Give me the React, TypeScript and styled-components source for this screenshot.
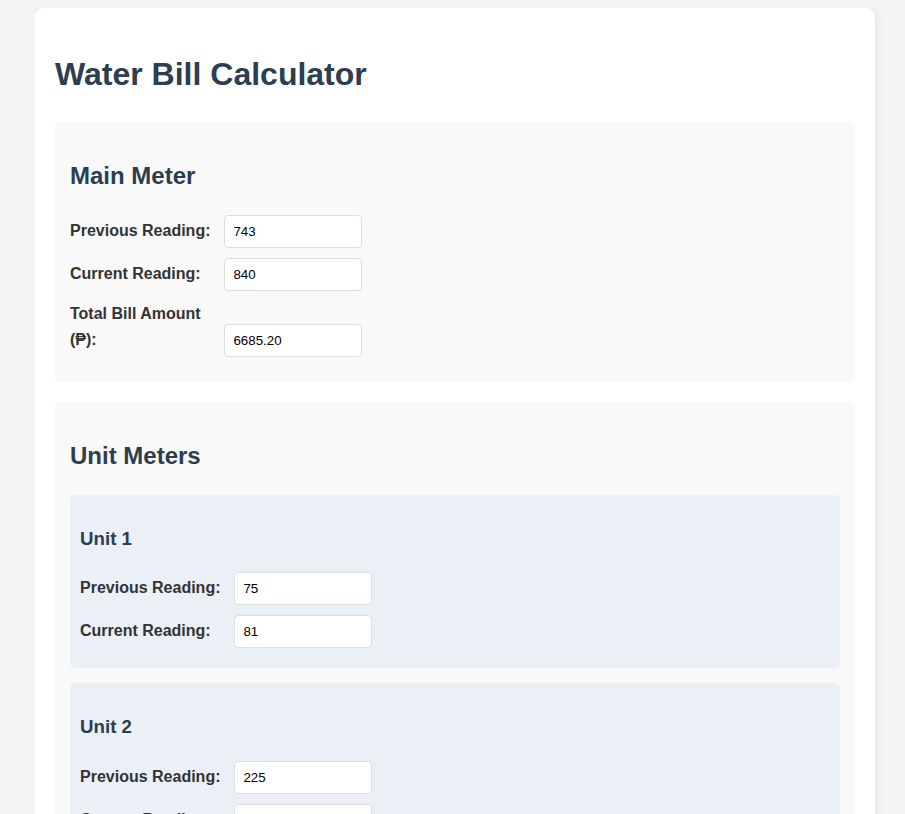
import React from "react";
import styled, { createGlobalStyle } from "styled-components";

const GlobalStyle = createGlobalStyle`
  html, body {
    background: #f4f4f4;
  }
  body {
    margin: 8px 0 0 35px;
    font-family: "Liberation Sans", Arial, sans-serif;
    line-height: 1.6;
    color: #333;
  }
`;

const Container = styled.div`
  width: 800px;
  padding: 20px;
  background: #fff;
  border-radius: 8px;
  box-shadow: 0 0 10px rgba(0, 0, 0, 0.1);
`;

const Title = styled.h1`
  font-size: 32px;
  margin: 21.44px 0;
  color: #2c3e50;
`;

const Section = styled.section`
  background: #f9f9f9;
  padding: 15px;
  border-radius: 5px;
  margin-bottom: 20px;
`;

const SectionTitle = styled.h2`
  font-size: 24px;
  margin: 19.92px 0;
  color: #2c3e50;
`;

const UnitCard = styled.div`
  background: #eaf0f6;
  padding: 10px;
  border-radius: 5px;
  margin-bottom: 15px;
`;

const UnitTitle = styled.h3`
  font-size: 18.72px;
  margin: 18.72px 0;
  color: #2c3e50;
`;

const FormGroup = styled.div`
  margin-bottom: 10px;
`;

const Label = styled.label`
  display: inline-block;
  width: 150px;
  font-weight: bold;
  color: #333;
`;

const Input = styled.input`
  width: 120px;
  padding: 8px;
  border: 1px solid #ddd;
  border-radius: 4px;
  font-family: "Liberation Sans", Arial, sans-serif;
  font-size: 13.33px;
  color: #000;
  background: #fff;
`;

type Field = { label: string; value: string };

const Row = ({ label, value }: Field) => (
  <FormGroup>
    <Label>{label}</Label> <Input type="text" defaultValue={value} />
  </FormGroup>
);

const units: { name: string; prev: string; curr: string }[] = [
  { name: "Unit 1", prev: "75", curr: "81" },
  { name: "Unit 2", prev: "225", curr: "247" },
  { name: "Unit 3", prev: "310", curr: "352" },
];

export default function App() {
  return (
    <>
      <GlobalStyle />
      <Container>
        <Title>Water Bill Calculator</Title>
        <Section>
          <SectionTitle>Main Meter</SectionTitle>
          <Row label="Previous Reading:" value="743" />
          <Row label="Current Reading:" value="840" />
          <Row label="Total Bill Amount (₱):" value="6685.20" />
        </Section>
        <Section>
          <SectionTitle>Unit Meters</SectionTitle>
          {units.map((u) => (
            <UnitCard key={u.name}>
              <UnitTitle>{u.name}</UnitTitle>
              <Row label="Previous Reading:" value={u.prev} />
              <Row label="Current Reading:" value={u.curr} />
            </UnitCard>
          ))}
        </Section>
      </Container>
    </>
  );
}
